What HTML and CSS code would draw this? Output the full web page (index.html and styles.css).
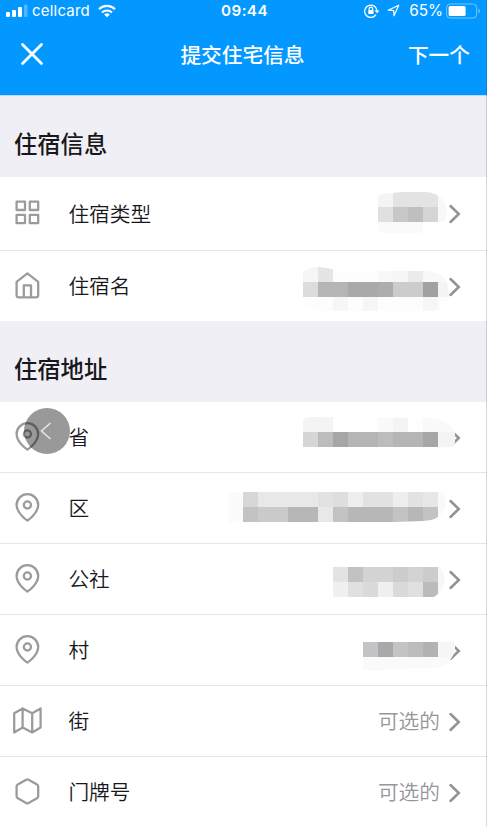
FILE: index.html
```html
<!DOCTYPE html>
<html lang="zh-CN">
<head>
<meta charset="utf-8">
<title>提交住宅信息</title>
<link rel="stylesheet" href="styles.css">
</head>
<body>
<svg class="defs" width="0" height="0" aria-hidden="true">
  <symbol id="pin" viewBox="0 0 24 24"><path d="M21 10c0 7-9 13-9 13s-9-6-9-13a9 9 0 0 1 18 0z"/><circle cx="12" cy="10" r="3"/></symbol>
  <symbol id="grid" viewBox="0 0 24 24"><path d="M3 3h7v7H3zM14 3h7v7h-7zM14 14h7v7h-7zM3 14h7v7H3z"/></symbol>
  <symbol id="home" viewBox="0 0 24 24"><path d="M3 9l9-7 9 7v11a2 2 0 0 1-2 2H5a2 2 0 0 1-2-2zM9 22V12h6v10"/></symbol>
  <symbol id="map" viewBox="0 0 24 24"><path d="M1 6v16l7-4 8 4 7-4V2l-7 4-8-4-7 4zM8 2v16M16 6v16"/></symbol>
  <symbol id="hexagon" viewBox="0 0 24 24"><path d="M21 16V8a2 2 0 0 0-1-1.730l-7-4a2 2 0 0 0-2 0l-7 4A2 2 0 0 0 3 8v8a2 2 0 0 0 1 1.730l7 4a2 2 0 0 0 2 0l7-4A2 2 0 0 0 21 16z"/></symbol>
  <symbol id="chevron" viewBox="0 0 14 20"><path d="M2.500 2l8.300 8-8.300 8"/></symbol>
</svg>
<div class="screen">
  <header class="header">
    <div class="status">
      <div class="status-left">
        <svg class="signal" width="22" height="14" viewBox="0 0 22 14"><rect x="0" y="8" width="4" height="5" rx="1"/><rect x="6" y="6" width="4" height="7" rx="1"/><rect x="12" y="3" width="4" height="10" rx="1"/><rect x="18" y=".5" width="3.500" height="12.500" rx="1" opacity=".3"/></svg>
        <span class="carrier">cellcard</span>
        <svg class="wifi" width="18" height="14" viewBox="0 0 18 14"><path d="M1 5.200a11.500 11.500 0 0 1 16 0M4 8.500a7.200 7.200 0 0 1 10 0"/><path class="solid" d="M9 13.200L6.200 10.500a4 4 0 0 1 5.600 0z"/></svg>
      </div>
      <span class="clock">09:44</span>
      <div class="status-right">
        <svg class="lock" width="15" height="14" viewBox="0 0 15 14"><path d="M12 10.700A6.200 6.200 0 1 1 13 6.600M11.300 6.400l1.800 1.900 1.500-1.900"/><path d="M5.200 6V4.900a1.700 1.700 0 0 1 3.400 0V6"/><rect class="solid" x="4.300" y="5.900" width="5.200" height="4" rx=".5"/></svg>
        <svg class="arrow" width="13" height="13" viewBox="0 0 13 13"><path d="M1.200 6.200L11.700 1.200 7 11.800 6.600 6.500z"/></svg>
        <span class="percent">65%</span>
        <svg class="battery" width="35" height="16" viewBox="0 0 35 16"><rect x=".6" y="1" width="30" height="14" rx="3.500" fill="none" stroke="#fff" stroke-opacity=".45"/><rect x="2.600" y="3" width="17" height="10" rx="1.500" fill="#fff"/><path d="M32.500 5.500q3 2.500 0 5z" fill="#fff" opacity=".5"/></svg>
      </div>
    </div>
    <nav class="nav">
      <svg class="close" width="24" height="24" viewBox="0 0 24 24"><path d="M2.500 2.500l19 19M21.500 2.500l-19 19"/></svg>
      <h1 class="title">提交住宅信息</h1>
      <span class="next">下一个</span>
    </nav>
  </header>

  <h2 class="section">住宿信息</h2>
  <ul class="list">
    <li class="row tall">
      <svg class="icon"><use href="#grid"/></svg><span class="label">住宿类型</span>
      <svg class="mosaic" width="70" height="45" viewBox="378 191 70 45">
        <clipPath id="c1"><path d="M378 196q5-3 15-3 26-3 39 0 12 3 15 16 0 10-4 13h-10v6q-4 5-22 5-26 2-33-3z"/></clipPath>
        <g clip-path="url(#c1)"><path fill="#f4f4f4" d="M378 192h15v15h-15z"/><path fill="#e3e3e3" d="M393 192h45v15h-45z"/><path fill="#e0e0e0" d="M378 207h15v15h-15z"/><path fill="#c7c7c7" d="M393 207h15v15h-15z"/><path fill="#bfbfbf" d="M408 207h15v15h-15z"/><path fill="#d5d5d5" d="M423 207h15v15h-15z"/><path fill="#f7f9f8" d="M438 192h10v30h-10z"/><path fill="#fafafa" d="M378 222h45v11h-45z"/></g>
      </svg>
      <svg class="chevron"><use href="#chevron"/></svg>
    </li>
    <li class="row last">
      <svg class="icon"><use href="#home"/></svg><span class="label">住宿名</span>
      <svg class="mosaic" width="145" height="46" viewBox="303 263 145 46">
        <clipPath id="c2"><path d="M303 272q7-6 17-5l13 2v2h90q18 0 24 11l2 13q-2 10-10 14-4 2-16 2h-90q-24 0-30-6z"/></clipPath>
        <g clip-path="url(#c2)"><path fill="#fdfdfd" d="M303 267h146v45H303z"/><path fill="#f6f6f6" d="M303 267h15v15h-15zM393 267h15v15h-15zM333 297h15v15h-15zM363 297h15v15h-15zM423 297h15v15h-15z"/><path fill="#e5e5e5" d="M318 267h15v15h-15z"/><path fill="#ebebeb" d="M408 267h15v15h-15z"/><path fill="#f8f8f8" d="M378 267h15v15h-15zM423 267h26v15h-26z"/><path fill="#dcdcdc" d="M303 282h15v15h-15z"/><path fill="#b5b5b5" d="M318 282h30v15h-30z"/><path fill="#a9a9a9" d="M348 282h30v15h-30z"/><path fill="#adadb1" d="M378 282h15v15h-15z"/><path fill="#ccc" d="M393 282h30v15h-30z"/><path fill="#a1a1a1" d="M423 282h15v15h-15z"/><path fill="#f3f5f4" d="M438 282h11v15h-11z"/></g>
      </svg>
      <svg class="chevron"><use href="#chevron"/></svg>
    </li>
  </ul>

  <h2 class="section">住宿地址</h2>
  <ul class="list">
    <li class="row">
      <svg class="icon"><use href="#pin"/></svg><span class="label">省</span>
      <svg class="mosaic" width="145" height="42" viewBox="303 416 145 42">
        <clipPath id="c3"><path d="M303 419q3-2 8-2l115 1q22 0 29 14v10q-3 10-15 15H318q-12-2-15-10z"/></clipPath>
        <g clip-path="url(#c3)"><path fill="#fefefe" d="M303 417h153v42H303z"/><path fill="#f4f4f4" d="M303 417h30v15h-30zM393 417h15v15h-15zM438 432h18v15h-18z"/><path fill="#f9f9f9" d="M378 417h15v15h-15zM423 417h32v15h-32z"/><path fill="#d6d6d6" d="M303 432h15v15h-15z"/><path fill="#bcbcbc" d="M318 432h15v15h-15zM378 432h15v15h-15z"/><path fill="#a6a6a6" d="M333 432h15v15h-15zM423 432h15v15h-15z"/><path fill="#b5b5b5" d="M348 432h30v15h-30zM393 432h30v15h-30z"/></g>
      </svg>
      <svg class="chevron"><use href="#chevron"/></svg>
    </li>
    <li class="row">
      <svg class="icon"><use href="#pin"/></svg><span class="label">区</span>
      <svg class="mosaic" width="220" height="30" viewBox="228 493 220 30">
        <clipPath id="c4"><path d="M228 492h214q4 5 4 15l-4 6q-4 7-19 8l-28 1H228z"/></clipPath>
        <g clip-path="url(#c4)"><path fill="#fbfbfb" d="M228 492h15v30h-15z"/><path fill="#d7d7d7" d="M243 492h15v15h-15z"/><path fill="#e8e8e8" d="M258 492h60v15h-60zM318 507h15v15h-15z"/><path fill="#e2e2e2" d="M318 492h15v15h-15zM363 492h30v15h-30zM408 492h15v15h-15z"/><path fill="#dedede" d="M333 492h15v15h-15z"/><path fill="#e7e7e7" d="M423 492h15v15h-15z"/><path fill="#eee" d="M348 492h15v15h-15zM393 492h15v15h-15z"/><path fill="#c3c3c3" d="M243 507h15v15h-15zM333 507h15v15h-15zM393 507h15v15h-15zM423 507h15v15h-15z"/><path fill="#cacaca" d="M258 507h30v15h-30z"/><path fill="#b7b7b7" d="M288 507h30v15h-30zM348 507h45v15h-45zM408 507h15v15h-15z"/><path fill="#f8faf9" d="M438 492h9v22h-9z"/></g>
      </svg>
      <svg class="chevron"><use href="#chevron"/></svg>
    </li>
    <li class="row">
      <svg class="icon"><use href="#pin"/></svg><span class="label">公社</span>
      <svg class="mosaic" width="115" height="30" viewBox="333 564 115 30">
        <clipPath id="c5"><path d="M333 567h107q4 5 5 15-2 9-11 15H333z"/></clipPath>
        <g clip-path="url(#c5)"><path fill="#e3e3e3" d="M333 567h15v15h-15z"/><path fill="#c2c2c2" d="M348 567h15v15h-15z"/><path fill="#d3d3d3" d="M363 567h30v15h-30zM408 567h15v15h-15z"/><path fill="#ccc" d="M393 567h15v15h-15zM423 567h15v15h-15z"/><path fill="#f0f0f0" d="M333 582h15v15h-15zM378 582h15v15h-15z"/><path fill="#e0e0e0" d="M348 582h15v15h-15zM408 582h15v15h-15z"/><path fill="#dadada" d="M363 582h15v15h-15zM393 582h15v15h-15z"/><path fill="#bbb" d="M423 582h15v15h-15z"/><path fill="#f7f7f7" d="M438 567h8v30h-8z"/></g>
      </svg>
      <svg class="chevron"><use href="#chevron"/></svg>
    </li>
    <li class="row">
      <svg class="icon"><use href="#pin"/></svg><span class="label">村</span>
      <svg class="mosaic" width="85" height="44" viewBox="363 628 85 44">
        <clipPath id="c6"><path d="M363 642h92v7q-3 12-10 16-4 3-14 3l-40 1q-18 3-28 0z"/></clipPath>
        <g clip-path="url(#c6)"><path fill="#fafafa" d="M363 642h92v30h-92z"/><path fill="#c4c4c8" d="M363 642h15v15h-15z"/><path fill="#a9a9a9" d="M378 642h15v15h-15z"/><path fill="#c4c4c4" d="M393 642h15v15h-15z"/><path fill="#bcbcbc" d="M408 642h15v15h-15z"/><path fill="#b2b2b2" d="M423 642h15v15h-15z"/><path fill="#f6f6f6" d="M438 642h16v15h-16z"/></g>
      </svg>
      <svg class="chevron"><use href="#chevron"/></svg>
    </li>
    <li class="row">
      <svg class="icon"><use href="#map"/></svg><span class="label">街</span>
      <span class="hint">可选的</span>
      <svg class="chevron"><use href="#chevron"/></svg>
    </li>
    <li class="row last">
      <svg class="icon"><use href="#hexagon"/></svg><span class="label">门牌号</span>
      <span class="hint">可选的</span>
      <svg class="chevron"><use href="#chevron"/></svg>
    </li>
  </ul>
  <div class="float-back"><svg width="12" height="18" viewBox="0 0 12 18"><path d="M10.500 1L1.500 9l9 8"/></svg></div>
</div>
</body>
</html>
```
FILE: styles.css
```css
* { box-sizing: border-box; }

body {
  margin: 0;
  background: #fff;
  font-family: "Noto Sans CJK SC", sans-serif;
  color: #17171c;
}

.defs { position: absolute; }

.screen {
  position: relative;
  height: 826px;
  overflow: hidden;
  background: #f0eff5;
}

/* thin edge along the right side */
.screen::after {
  content: "";
  position: absolute;
  top: 0;
  right: 0;
  width: 1px;
  height: 100%;
  background: rgba(60, 60, 70, .2);
}

.header {
  height: 96px;
  background: #0398ff;
  border-bottom: 1px solid #b9dcf8;
  color: #fff;
}

.status {
  display: grid;
  grid-template-columns: 1fr auto 1fr;
  align-items: center;
  height: 21px;
  padding: 0 6px 0 6px;
  font-family: Inter, sans-serif;
  font-size: 15px;
  line-height: 21px;
}

.status-left, .status-right { display: flex; align-items: center; }
.status-right { justify-content: flex-end; }
.signal { fill: #fff; margin-right: 4px; }
.carrier { width: 59px; letter-spacing: .2px; }
.wifi { margin-left: 7px; fill: none; stroke: #fff; stroke-width: 2.2; }
.solid { fill: #fff; stroke: none; }
.clock { padding-left: 2px; font-weight: 600; font-size: 15.200px; letter-spacing: .4px; }
.lock { fill: none; stroke: #fff; stroke-width: 1.3; margin-right: 8px; }
.arrow { fill: none; stroke: #fff; stroke-width: 1.2; stroke-linejoin: round; margin-right: 9px; }
.percent { margin-right: 3px; font-size: 15.300px; }

.nav {
  display: grid;
  grid-template-columns: 1fr auto 1fr;
  align-items: center;
  height: 66px;
  padding: 0 17px 0 20px;
}

.close { fill: none; stroke: #fff; stroke-width: 2.8; stroke-linecap: round; }
.title { margin: 0 5px 0 0; font-size: 20.700px; font-weight: 500; line-height: 30px; }
.next { justify-self: end; font-size: 20.700px; font-weight: 500; line-height: 30px; }

.section {
  display: flex;
  align-items: center;
  height: 81px;
  margin: 0;
  padding: 12px 14px 0;
  font-size: 23.300px;
  font-weight: 500;
  line-height: 34px;
}

.list { margin: 0; padding: 0; list-style: none; background: #fff; }

.row {
  display: flex;
  align-items: center;
  height: 71px;
  padding: 0 25px 0 13.600px;
  border-bottom: 1px solid #e6e6e8;
}

.row.tall { height: 74px; }
.row.last { border-bottom: 0; height: 70px; }

.icon {
  width: 28.800px;
  height: 28.800px;
  margin: 0 26.400px 2px -.4px;
  overflow: visible;
  fill: none;
  stroke: #9b9b9b;
  stroke-width: 1.9;
  stroke-linecap: round;
  stroke-linejoin: round;
}

symbol { overflow: visible; }

.label { flex: 1; margin-bottom: 2px; font-size: 20.700px; font-weight: 350; line-height: 30px; }
.hint { margin: 0 8px 2px 0; font-size: 20.700px; font-weight: 350; line-height: 30px; color: #96969c; }

.mosaic { position: relative; z-index: 1; overflow: visible; shape-rendering: crispEdges; }

.chevron {
  width: 14px;
  height: 20px;
  margin-top: 1px;
  fill: none;
  stroke: #929297;
  stroke-width: 2.5;
  stroke-linecap: round;
}

.float-back {
  position: absolute;
  z-index: 2;
  left: 24px;
  top: 408px;
  display: flex;
  align-items: center;
  justify-content: center;
  width: 46px;
  height: 46px;
  padding-right: 2px;
  border-radius: 50%;
  background: rgba(0, 0, 0, .4);
}

.float-back svg { fill: none; stroke: #e8e8e8; stroke-width: 1.5; }
```
